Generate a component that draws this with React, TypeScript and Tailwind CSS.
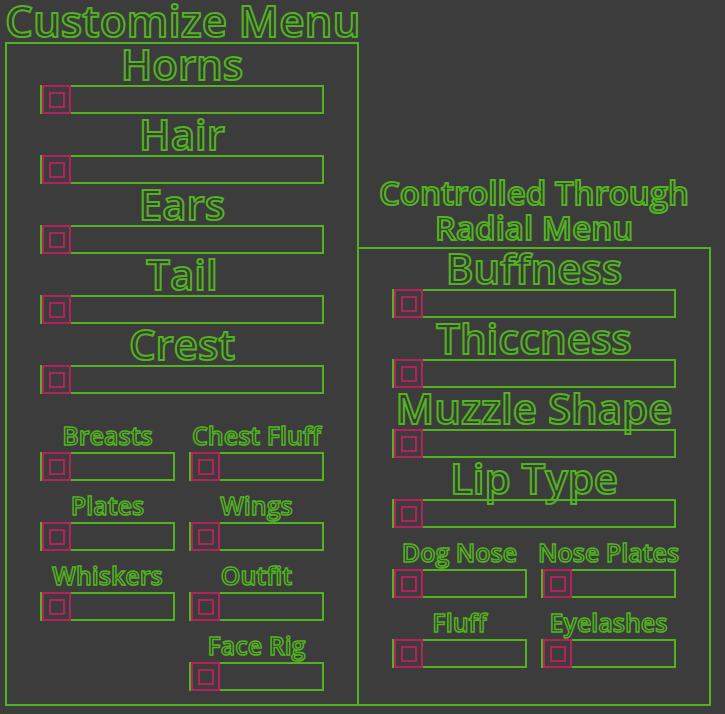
import type { ReactNode } from 'react'

// Outlined label text: transparent fill, green stroke
const outline = "font-['Open_Sans',sans-serif] font-semibold text-transparent whitespace-nowrap"
const strokeBig = '[-webkit-text-stroke:2px_#52b320]'
const strokeSmall = '[-webkit-text-stroke:1.5px_#52b320]'

const bigSliders = ['Horns', 'Hair', 'Ears', 'Tail', 'Crest']
const smallLeft: [string | null, string | null][] = [
  ['Breasts', 'Chest Fluff'],
  ['Plates', 'Wings'],
  ['Whiskers', 'Outfit'],
  [null, 'Face Rig'],
]
const radialBig = ['Buffness', 'Thiccness', 'Muzzle Shape', 'Lip Type']
const radialSmall: [string, string][] = [
  ['Dog Nose', 'Nose Plates'],
  ['Fluff', 'Eyelashes'],
]

function Track({ width }: { width: string }) {
  return (
    <div className={`flex h-[29px] ${width} border-2 border-[#52b320]`}>
      <div className="-my-[2px] flex h-[29px] w-[29px] items-center justify-center border-2 border-[#b3225d]">
        <div className="h-[16px] w-[16px] border-2 border-[#b3225d]" />
      </div>
    </div>
  )
}

function BigLabel({ children }: { children: ReactNode }) {
  return (
    <div className="flex h-[41px] items-end justify-center">
      <span className={`${outline} ${strokeBig} text-[42px] leading-none`}>{children}</span>
    </div>
  )
}

function BigSlider({ label }: { label: string }) {
  return (
    <div className="flex flex-col items-center">
      <BigLabel>{label}</BigLabel>
      <Track width="w-[284px]" />
    </div>
  )
}

function SmallSlider({ label }: { label: string | null }) {
  if (!label) return <div className="w-[135px]" />
  return (
    <div className="flex w-[135px] flex-col">
      <div className="flex h-[41px] items-end justify-center">
        <span className={`${outline} ${strokeSmall} mb-[4px] text-[25px] leading-none`}>{label}</span>
      </div>
      <Track width="w-[135px]" />
    </div>
  )
}

function SmallRow({ pair }: { pair: [string | null, string | null] }) {
  return (
    <div className="flex justify-center gap-[14px]">
      <SmallSlider label={pair[0]} />
      <SmallSlider label={pair[1]} />
    </div>
  )
}

export default function App() {
  return (
    <div className="h-[714px] w-[725px] overflow-hidden bg-[#3c3c3c] pl-[5px]">
      <div className="h-[42px]">
        <span className={`${outline} ${strokeBig} block text-[44px] leading-[40px]`}>Customize Menu</span>
      </div>

      <div className="flex">
        {/* Customize panel */}
        <div className="h-[664px] w-[354px] border-2 border-[#52b320]">
          {bigSliders.map((name) => (
            <BigSlider key={name} label={name} />
          ))}
          <div className="h-[17px]" />
          {smallLeft.map((pair, i) => (
            <SmallRow key={i} pair={pair} />
          ))}
        </div>

        {/* Radial menu column */}
        <div className="-ml-[2px] flex w-[354px] flex-col">
          <div className="flex h-[205px] flex-col items-center justify-end pb-[2px]">
            <span className={`${outline} ${strokeBig} text-[33px] leading-[35px]`}>Controlled Through</span>
            <span className={`${outline} ${strokeBig} text-[33px] leading-[35px]`}>Radial Menu</span>
          </div>
          <div className="h-[459px] border-2 border-[#52b320]">
            <div className="-mt-px">
              {radialBig.map((name) => (
                <BigSlider key={name} label={name} />
              ))}
              {radialSmall.map((pair, i) => (
                <SmallRow key={i} pair={pair} />
              ))}
            </div>
          </div>
        </div>
      </div>
    </div>
  )
}
